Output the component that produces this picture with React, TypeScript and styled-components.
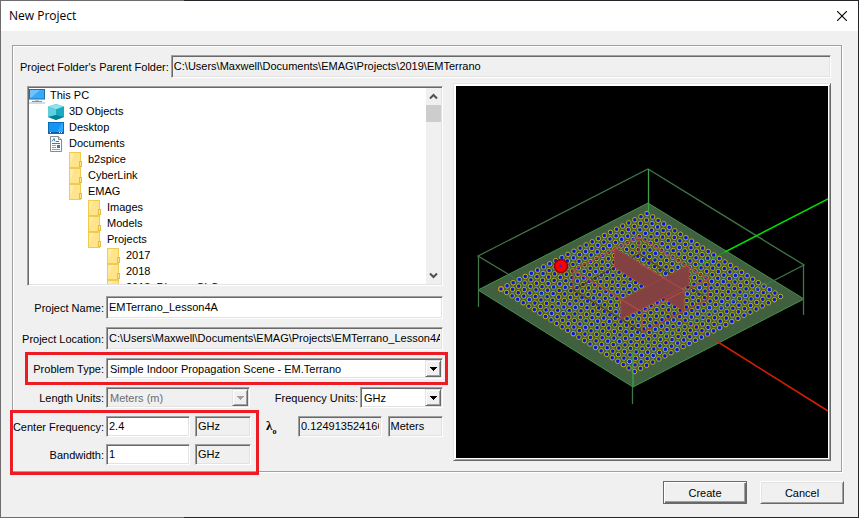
import React from "react";
import styled, { createGlobalStyle, css } from "styled-components";

const GlobalStyle = createGlobalStyle`
  * { box-sizing: border-box; }
  body { margin: 0; }
  body, input, select, button {
    font-family: "Liberation Sans", Arial, sans-serif;
    font-size: 11px;
    line-height: 16px;
    color: #000;
  }
`;

const sunken = css`
  border: 1px solid;
  border-color: #a0a0a0 #fff #fff #a0a0a0;
  box-shadow: inset 1px 1px 0 #696969, inset -1px -1px 0 #e3e3e3;
`;

const Frame = styled.div`
  min-height: 100vh;
  padding: 1px;
  display: flex;
  flex-direction: column;
  background: linear-gradient(to right, #6f6c70 184px, #26242a 184px);
`;

const TitleBar = styled.header`
  height: 30px;
  padding: 0 10px 0 8px;
  display: flex;
  align-items: center;
  justify-content: space-between;
  background: #fff;
`;

const Title = styled.h1`
  margin: 0;
  font: 400 12px/16px "Open Sans", "Segoe UI", sans-serif;
`;

const CloseButton = styled.button`
  width: 12px;
  height: 12px;
  padding: 0;
  border: 0;
  background: none;
  display: grid;
  place-items: center;
`;

const Body = styled.main`
  flex: 1;
  padding: 14px 16px 12px 11px;
  background: #f0f0f0;
`;

const Group = styled.section`
  border: 1px solid #a0a0a0;
  box-shadow: 1px 1px 0 #fff, inset 1px 1px 0 #fff;
  padding: 9px 10px 6px 1px;
`;

const ParentRow = styled.div`
  display: flex;
  align-items: center;
  gap: 2px;
  padding-left: 6px;
`;

const Columns = styled.div`
  display: grid;
  grid-template-columns: minmax(0, 429fr) minmax(0, 378fr);
  column-gap: 10px;
  padding-top: 5px;
  align-items: start;
`;

const LeftColumn = styled.div`
  padding-top: 3px;
`;

const Label = styled.label`
  display: flex;
  justify-content: flex-end;
  white-space: nowrap;
`;

const Field = styled.input<{ $tall?: boolean }>`
  ${sunken}
  min-width: 0;
  width: 100%;
  height: ${(p) => (p.$tall ? 23 : 21)}px;
  padding: 0 2px 2px;
  border-radius: 0;
  outline: 0;
  background: #fff;
  &:read-only { background: #f0f0f0; }
`;

const TreeBox = styled.div`
  ${sunken}
  height: 200px;
  margin-left: 13px;
  padding: 1px;
  display: flex;
  background: #fff;
`;

const Tree = styled.ul`
  flex: 1;
  margin: 0;
  padding: 0;
  list-style: none;
  overflow: hidden;
`;

const Node = styled.li<{ $depth: number }>`
  height: 16px;
  line-height: 14px;
  padding-left: ${(p) => p.$depth * 19}px;
  display: flex;
  gap: 5px;
  white-space: nowrap;
  svg { flex: none; }
`;

const ScrollBar = styled.div`
  width: 15px;
  display: flex;
  flex-direction: column;
  background: #f0f0f0;
`;

const ScrollButton = styled.button`
  height: 17px;
  padding: 0;
  border: 0;
  background: none;
  display: grid;
  place-items: center;
`;

const ScrollTrack = styled.div`
  flex: 1;
`;

const Thumb = styled.div`
  height: 17px;
  background: #cdcdcd;
`;

const Form = styled.form`
  padding-top: 10px;
  display: flex;
  flex-direction: column;
  gap: 8px;
`;

const FormRow = styled.div`
  display: grid;
  grid-template-columns: 90px minmax(0, 1fr);
  column-gap: 2px;
  align-items: center;
`;

const UnitsRow = styled(FormRow)`
  grid-template-columns: 90px minmax(0, 144fr) minmax(0, 106fr) minmax(0, 83fr);
`;

const FrequencyRow = styled.div`
  display: grid;
  grid-template-columns: minmax(0, 237fr) minmax(0, 192fr);
`;

const FrequencyFields = styled.div`
  display: flex;
  flex-direction: column;
  gap: 7px;
`;

const ValueWithUnit = styled.div`
  display: grid;
  grid-template-columns: minmax(0, 84fr) minmax(0, 56fr);
  column-gap: 5px;
`;

const WaveFields = styled.div`
  display: grid;
  grid-template-columns: 31px minmax(0, 83fr) minmax(0, 55fr);
  column-gap: 6px;
  padding-left: 10px;
  align-items: center;
  align-self: start;
`;

const Lambda = styled.label`
  padding-left: 5px;
  font: 700 13px/16px "Liberation Serif", serif;
  sub { font-size: 8px; line-height: 8px; }
`;

const Marked = styled.div<{ $wide?: boolean }>`
  position: relative;
  &::after {
    content: "";
    position: absolute;
    inset: ${(p) => (p.$wide ? "-6px -5px -6px 11px" : "-6px -8px -10px -4px")};
    border: 3px solid #ed1c24;
    pointer-events: none;
  }
`;

const SelectBox = styled.div`
  position: relative;
  min-width: 0;
`;

const Select = styled.select`
  ${sunken}
  appearance: none;
  display: block;
  width: 100%;
  height: 21px;
  padding: 0 18px 0 3px;
  border-radius: 0;
  outline: 0;
  background: #fff;
  &:disabled { background: #f0f0f0; color: #6d6d6d; opacity: 1; }
`;

const DropArrow = styled.span<{ $dim?: boolean }>`
  position: absolute;
  top: 2px;
  right: 2px;
  bottom: 2px;
  width: 16px;
  display: grid;
  place-items: center;
  pointer-events: none;
  background: #f0f0f0;
  border: 1px solid;
  border-color: #e3e3e3 #696969 #696969 #e3e3e3;
  box-shadow: inset 1px 1px 0 #fff, inset -1px -1px 0 #a0a0a0;
  color: ${(p) => (p.$dim ? "#a0a0a0" : "#000")};
`;

const Preview = styled.div`
  border: 1px solid;
  border-color: #e3e3e3 #696969 #696969 #e3e3e3;
  box-shadow: inset 1px 1px 0 #fff, inset -1px -1px 0 #a0a0a0;
  padding: 2px;
  background: #fff;
  svg { display: block; width: 100%; height: auto; background: #000; }
`;

const Actions = styled.footer`
  display: flex;
  justify-content: flex-end;
  gap: 13px;
  padding-top: 9px;
  margin-right: -2px;
`;

const PushButton = styled.button<{ $primary?: boolean }>`
  width: 84px;
  height: 23px;
  padding: 0;
  border-radius: 0;
  background: #f0f0f0;
  border: 1px solid;
  ${(p) =>
    p.$primary
      ? css`
          border-color: #696969;
          box-shadow: inset 1px 1px 0 #fff, inset -1px -1px 0 #696969, inset -2px -2px 0 #a0a0a0;
        `
      : css`
          border-color: #fff #696969 #696969 #fff;
          box-shadow: inset 1px 1px 0 #e3e3e3, inset -1px -1px 0 #a0a0a0;
        `}
`;

type Kind = "pc" | "cube" | "desktop" | "doc" | "folder";

function NodeIcon({ kind }: { kind: Kind }) {
  return (
    <svg width="16" height="16" viewBox="0 0 16 16" aria-hidden="true">
      {kind === "pc" && (
        <>
          <rect x=".5" y="1.5" width="15" height="9.5" fill="#39a9f5" stroke="#1b6ea8" />
          <path d="M1 10.5V2h10z" fill="#6cc5ff" />
          <path d="M6 12h4v1H6z" fill="#b7c4cf" />
          <path d="M3 13h10v1H3z" fill="#8296a8" />
          <path d="M0 15h16" stroke="#a9b6c4" />
        </>
      )}
      {kind === "cube" && (
        <>
          <path d="M8 0l8 2.5v10.5L8 16l-8-3V2.5z" fill="#26b6cb" />
          <path d="M8 0l8 2.5L8 5.5 0 2.5z" fill="#8fe3ee" />
          <path d="M0 2.5l8 3V11L0 13z" fill="#5fcede" />
          <path d="M8 5.5l8-3V13l-8-2z" fill="#1aa9c2" />
          <path d="M0 13l8-2 8 2-8 3z" fill="#087f98" />
        </>
      )}
      {kind === "desktop" && (
        <>
          <rect x=".5" y="2.5" width="15" height="11" fill="#1296f5" stroke="#0b6cb5" />
          <path d="M9 12l5-9h1v9z" fill="#2ea8ff" />
          <path d="M1 12.5h14" stroke="#0a5c9e" />
          <path d="M2 12.5h1M11 12.5h1M13 12.5h1" stroke="#fff" />
        </>
      )}
      {kind === "doc" && (
        <>
          <path d="M2.5.5h8l3 3v12h-11z" fill="#fafafa" stroke="#8a8a8a" />
          <path d="M10.5.5v3h3" fill="#ddd" stroke="#8a8a8a" />
          <path d="M4 5.5L6 2.5 7 5.5M8 5.5h3M4 7.5h8" stroke="#1f83d0" fill="none" />
          <path d="M4 9.5h4M4 11.5h4M4 13.5h8" stroke="#7fa6c4" />
          <path d="M9 9h3v2H9z" fill="#2b7fc4" />
          <path d="M9 11h3v1H9z" fill="#3e8b4a" />
        </>
      )}
      {kind === "folder" && (
        <>
          <rect x="2.5" y=".5" width="11" height="15" fill="#ffe48c" stroke="#efcb51" />
          <path d="M3 1h5L3 12z" fill="#ffeaa6" />
          <rect x="12.5" y="9.5" width="2" height="5" fill="#ffe48c" stroke="#e6bd3f" />
        </>
      )}
    </svg>
  );
}

const nodes: [number, Kind, string][] = [
  [0, "pc", "This PC"],
  [1, "cube", "3D Objects"],
  [1, "desktop", "Desktop"],
  [1, "doc", "Documents"],
  [2, "folder", "b2spice"],
  [2, "folder", "CyberLink"],
  [2, "folder", "EMAG"],
  [3, "folder", "Images"],
  [3, "folder", "Models"],
  [3, "folder", "Projects"],
  [4, "folder", "2017"],
  [4, "folder", "2018"],
  [4, "folder", "2018_Disney_CLC"],
];

function Chevron({ down }: { down?: boolean }) {
  return (
    <svg width="9" height="7" viewBox="0 0 9 7" aria-hidden="true">
      <path d={down ? "M1 1.5l3.5 3.5L8 1.5" : "M1 5.5L4.5 2 8 5.5"} fill="none" stroke="#505050" strokeWidth="2" />
    </svg>
  );
}

function Triangle() {
  return (
    <svg width="7" height="4" viewBox="0 0 7 4" shapeRendering="crispEdges" aria-hidden="true">
      <path d="M0 0h7L3.5 4z" fill="currentColor" />
    </svg>
  );
}

const COUNT = 25;
const receivers = Array.from({ length: COUNT * COUNT }, (_, i) => {
  const u = (i % COUNT) / (COUNT - 1);
  const v = Math.floor(i / COUNT) / (COUNT - 1);
  const mix = (a: number, b: number, c: number, d: number) =>
    (1 - u) * (1 - v) * a + u * (1 - v) * b + (1 - u) * v * c + u * v * d;
  return { x: mix(501, 647, 634.5, 780.5), y: mix(289, 213.5, 371.5, 296.5) };
});

function Scene() {
  return (
    <svg viewBox="456 86 372 372" role="img" aria-label="Indoor scene preview">
      <path d="M478 290L648 203 804 299 633 387z" fill="#40603f" stroke="#44944a" />
      {receivers.map((r, i) => (
        <g key={i}>
          <circle cx={r.x} cy={r.y} r="2.3" fill="#2c5a50" stroke="#c8b428" strokeWidth=".9" />
          <rect x={r.x - 1.3} y={r.y - 1.3} width="2.6" height="2.6" fill="#0a0aff" />
        </g>
      ))}
      <circle cx="501" cy="289" r="2.5" fill="none" stroke="#e09010" />
      <g fill="none" stroke="#407548" strokeWidth="1.3">
        <path d="M508 274L478 256 648 169 804 265 773 281" />
        <path d="M508 274L633 352 773 281" stroke="#3f8f55" strokeOpacity=".45" />
        <path d="M478.5 256V307M803.5 265V315M632.5 387V404" />
        <path d="M648.5 169V213M633 352V387" stroke="#3fa04a" />
      </g>
      <path d="M698 266L725 252" stroke="#10c010" strokeOpacity=".7" />
      <path d="M725 252L828 199" stroke="#00e000" strokeWidth="1.5" />
      <path d="M664 310L718 342" stroke="#a04030" strokeOpacity=".6" />
      <path d="M718 342L828 411" stroke="#d42000" strokeWidth="1.5" />
      <g fill="none" stroke="#a2453f" strokeWidth="1.3">
        <path d="M573 290L639 254 708 299 642 332z" stroke="#54301f" strokeWidth="1" />
        <path d="M642 332L708 299" />
        <path d="M573 270V290M639 237V253M708 279V299" stroke="#9a403c" />
      </g>
      <path d="M614.5 248L684 290V311L614.5 267z" fill="#834142" stroke="#a04442" />
      <path d="M621 300L689 265V285L621 319z" fill="#834142" stroke="#a04442" />
      <path d="M640 264L684 290" stroke="#b54b48" />
      <path d="M573 270L639 237 708 279 642 312zM642 312V332" fill="none" stroke="#b04a45" strokeWidth="1.3" />
      <circle cx="561" cy="266" r="6.5" fill="#f00" stroke="#8f0808" strokeWidth="1.5" />
      <circle cx="560.5" cy="266" r="1.5" fill="#4020e0" />
    </svg>
  );
}

export default function App() {
  return (
    <Frame>
      <GlobalStyle />
      <TitleBar>
        <Title>New Project</Title>
        <CloseButton aria-label="Close">
          <svg width="10" height="10" viewBox="0 0 10 10" aria-hidden="true">
            <path d="M0 0l10 10M10 0L0 10" stroke="#000" strokeWidth="1.1" />
          </svg>
        </CloseButton>
      </TitleBar>
      <Body>
        <Group>
          <ParentRow>
            <Label htmlFor="parent">Project Folder's Parent Folder:</Label>
            <Field id="parent" $tall readOnly value="C:\Users\Maxwell\Documents\EMAG\Projects\2019\EMTerrano" />
          </ParentRow>
          <Columns>
            <LeftColumn>
              <TreeBox>
                <Tree>
                  {nodes.map(([depth, kind, name], i) => (
                    <Node key={i} $depth={depth}>
                      <NodeIcon kind={kind} />
                      {name}
                    </Node>
                  ))}
                </Tree>
                <ScrollBar>
                  <ScrollButton aria-label="Scroll up"><Chevron /></ScrollButton>
                  <ScrollTrack><Thumb /></ScrollTrack>
                  <ScrollButton aria-label="Scroll down"><Chevron down /></ScrollButton>
                </ScrollBar>
              </TreeBox>
              <Form>
                <FormRow>
                  <Label htmlFor="name">Project Name:</Label>
                  <Field id="name" $tall defaultValue="EMTerrano_Lesson4A" />
                </FormRow>
                <FormRow>
                  <Label htmlFor="location">Project Location:</Label>
                  <Field id="location" $tall readOnly value="C:\Users\Maxwell\Documents\EMAG\Projects\EMTerrano_Lesson4A" />
                </FormRow>
                <Marked $wide>
                  <FormRow>
                    <Label htmlFor="problem">Problem Type:</Label>
                    <SelectBox>
                      <Select id="problem"><option>Simple Indoor Propagation Scene - EM.Terrano</option></Select>
                      <DropArrow><Triangle /></DropArrow>
                    </SelectBox>
                  </FormRow>
                </Marked>
                <UnitsRow>
                  <Label htmlFor="length">Length Units:</Label>
                  <SelectBox>
                    <Select id="length" disabled><option>Meters (m)</option></Select>
                    <DropArrow $dim><Triangle /></DropArrow>
                  </SelectBox>
                  <Label htmlFor="funits">Frequency Units:</Label>
                  <SelectBox>
                    <Select id="funits"><option>GHz</option></Select>
                    <DropArrow><Triangle /></DropArrow>
                  </SelectBox>
                </UnitsRow>
                <FrequencyRow>
                  <Marked>
                    <FrequencyFields>
                      <FormRow>
                        <Label htmlFor="center">Center Frequency:</Label>
                        <ValueWithUnit>
                          <Field id="center" defaultValue="2.4" />
                          <Field aria-label="Center frequency unit" readOnly value="GHz" />
                        </ValueWithUnit>
                      </FormRow>
                      <FormRow>
                        <Label htmlFor="bandwidth">Bandwidth:</Label>
                        <ValueWithUnit>
                          <Field id="bandwidth" defaultValue="1" />
                          <Field aria-label="Bandwidth unit" readOnly value="GHz" />
                        </ValueWithUnit>
                      </FormRow>
                    </FrequencyFields>
                  </Marked>
                  <WaveFields>
                    <Lambda htmlFor="wave">λ<sub>o</sub></Lambda>
                    <Field id="wave" readOnly value="0.124913524166" />
                    <Field aria-label="Wavelength unit" readOnly value="Meters" />
                  </WaveFields>
                </FrequencyRow>
              </Form>
            </LeftColumn>
            <Preview><Scene /></Preview>
          </Columns>
        </Group>
        <Actions>
          <PushButton $primary>Create</PushButton>
          <PushButton>Cancel</PushButton>
        </Actions>
      </Body>
    </Frame>
  );
}
